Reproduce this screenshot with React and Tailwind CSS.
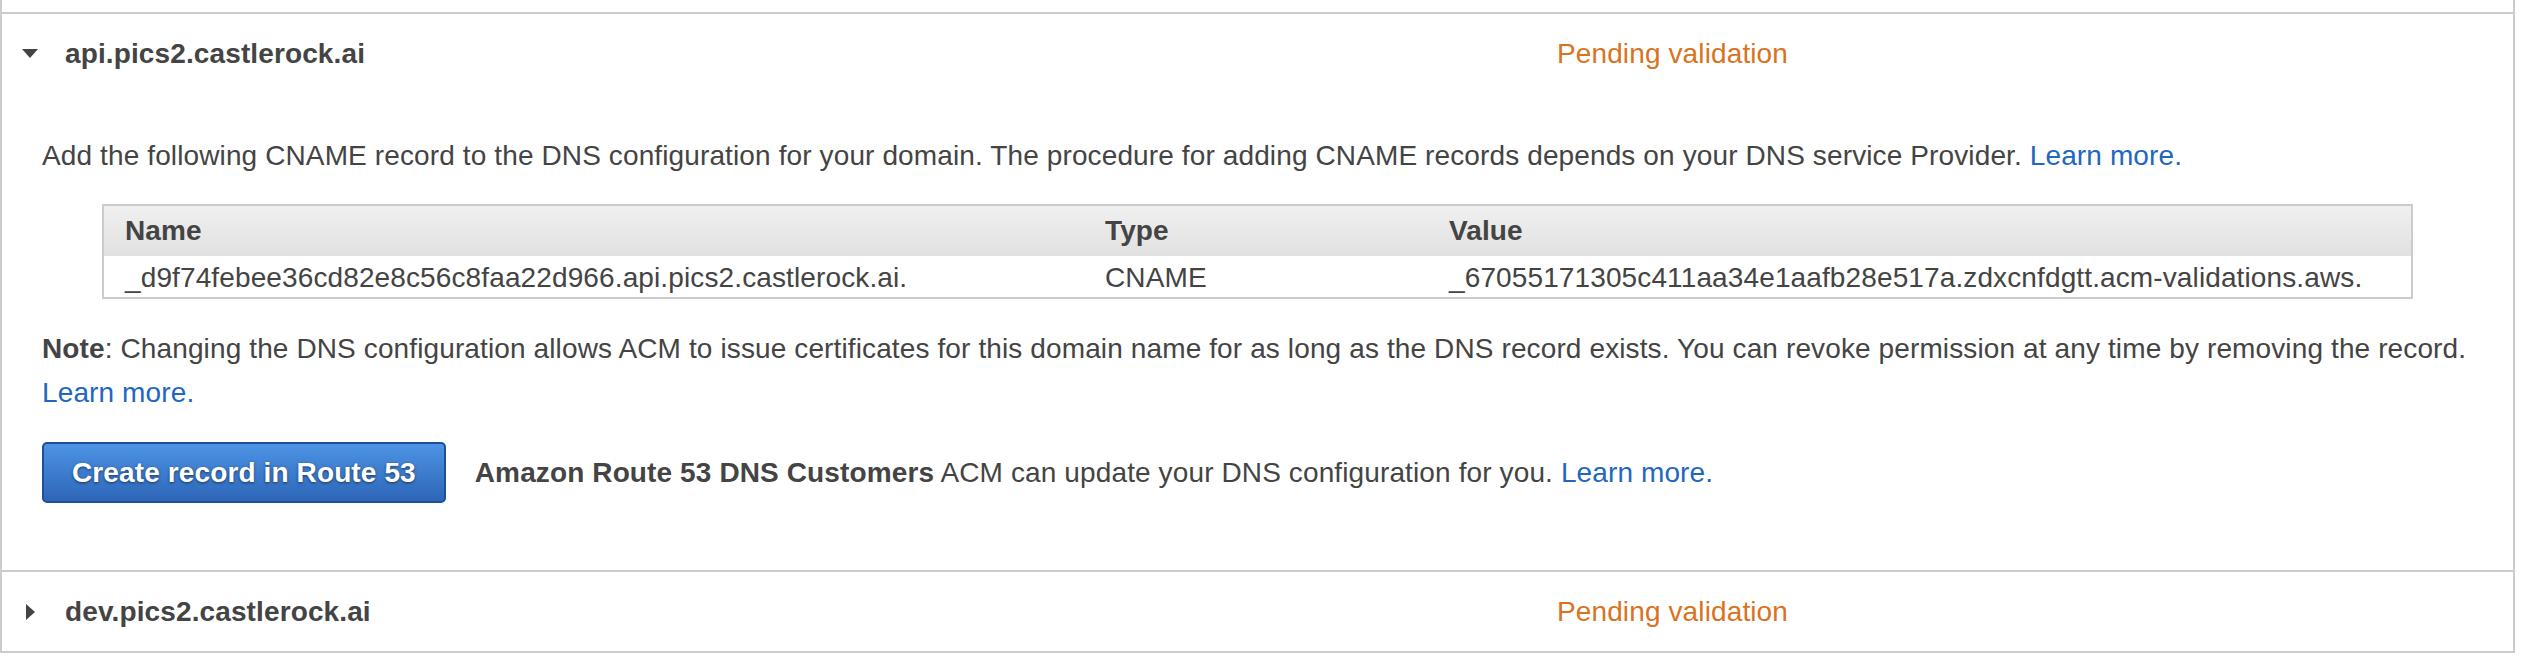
import React from "react";

function Caret({ open }) {
  return (
    <div className="w-[18px] flex items-center justify-center">
      {open ? (
        <svg width="16" height="9" viewBox="0 0 16 9">
          <polygon points="0,0 16,0 8,9" fill="#444" />
        </svg>
      ) : (
        <svg width="9" height="16" viewBox="0 0 9 16">
          <polygon points="0,0 9,8 0,16" fill="#444" />
        </svg>
      )}
    </div>
  );
}

function Header({ open, name }) {
  return (
    <div className="h-[79px] flex items-center pl-[19px]">
      <Caret open={open} />
      <div className="w-[1492px] ml-[26px] font-bold">{name}</div>
      <div className="text-[#d9731f]">Pending validation</div>
    </div>
  );
}

function Link({ children }) {
  return <span className="text-[#2167bf]">{children}</span>;
}

export default function App() {
  return (
    <div className="bg-white min-h-[672px]">
      <div
        className="w-[2515px] pt-[12px] border-x-2 border-b-2 border-[#cccccc] text-[28px] leading-[44px] tracking-[0.12px] text-[#444444]"
        style={{ fontFamily: "'Liberation Sans', Arial, Helvetica, sans-serif" }}
      >
        <div className="border-t-2 border-[#cccccc]">
          <Header open name="api.pics2.castlerock.ai" />
          <div className="px-[40px] pt-[41px] pb-[67px]">
            <p>
              Add the following CNAME record to the DNS configuration for your domain. The procedure
              for adding CNAME records depends on your DNS service Provider. <Link>Learn more.</Link>
            </p>
            <div className="mt-[26px] ml-[60px] w-[2311px] border-2 border-[#cccccc]">
              <div className="grid grid-cols-[980px_344px_1fr] h-[50px] items-center font-bold bg-gradient-to-b from-[#f0f0f0] to-[#e1e1e1]">
                <div className="pl-[21px]">Name</div>
                <div className="pl-[21px]">Type</div>
                <div className="pl-[21px]">Value</div>
              </div>
              <div className="grid grid-cols-[980px_344px_1fr] h-[41px] items-center bg-white">
                <div className="pl-[21px]">_d9f74febee36cd82e8c56c8faa22d966.api.pics2.castlerock.ai.</div>
                <div className="pl-[21px]">CNAME</div>
                <div className="pl-[21px]">_67055171305c411aa34e1aafb28e517a.zdxcnfdgtt.acm-validations.aws.</div>
              </div>
            </div>
            <p className="mt-[28px]">
              <span className="font-bold">Note</span>: Changing the DNS configuration allows ACM to issue
              certificates for this domain name for as long as the DNS record exists. You can revoke
              permission at any time by removing the record. <Link>Learn more.</Link>
            </p>
            <div className="mt-[27px] flex items-center">
              <button className="h-[61px] px-[28px] rounded-[5px] border-2 border-[#1f4f9c] bg-gradient-to-b from-[#4d93e4] to-[#2e66b8] text-white font-bold [text-shadow:0_1px_3px_rgba(0,0,0,0.55)] leading-none">
                Create record in Route 53
              </button>
              <div className="ml-[29px]">
                <span className="font-bold">Amazon Route 53 DNS Customers</span> ACM can update your DNS
                configuration for you. <Link>Learn more.</Link>
              </div>
            </div>
          </div>
        </div>
        <div className="border-t-2 border-[#cccccc]">
          <Header name="dev.pics2.castlerock.ai" />
        </div>
      </div>
    </div>
  );
}
